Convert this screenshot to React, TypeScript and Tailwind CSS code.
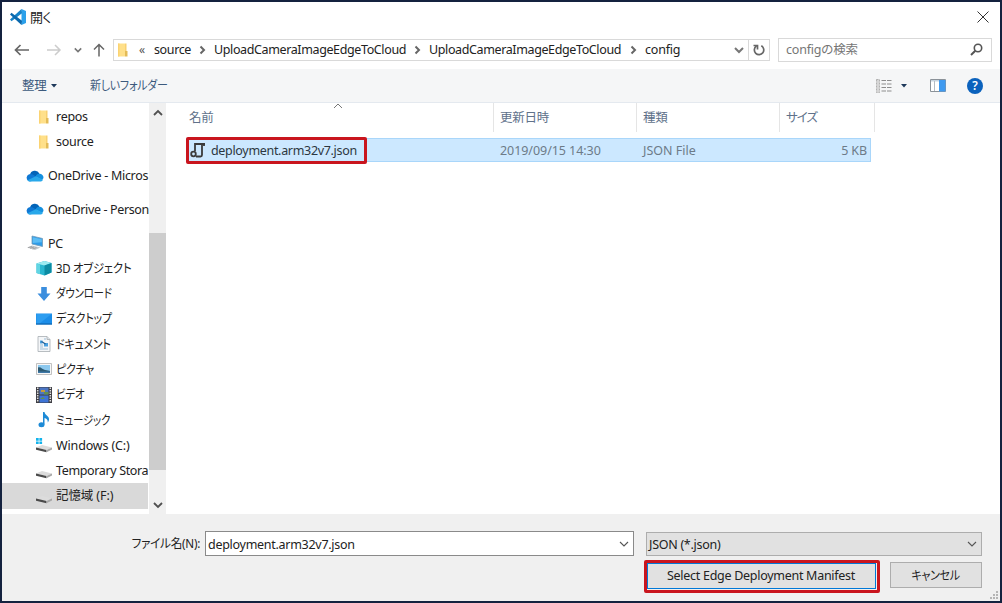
import { ReactNode } from 'react'
import clsx from 'clsx'

type NavItem = {
  label: string
  icon: ReactNode
  text?: string
  indent?: string
  gap?: boolean
  active?: boolean
}

const Chevron = ({ d, className, w = 1.6 }: { d: string; className?: string; w?: number }) => (
  <svg viewBox="0 0 10 10" className={clsx('h-2.5 shrink-0', className ?? 'w-2.5')} fill="none" stroke="currentColor" strokeWidth={w}>
    <path d={d} />
  </svg>
)

const DOWN = 'M1 3l4 4 4-4'
const UP = 'M1 7l4-4 4 4'
const RIGHT = 'M3.5 1.5L7 5 3.5 8.5'

// narrow kana, as in the system UI font
const KANA = 'inline-block origin-left scale-x-[.84]'

const Folder = () => (
  <svg viewBox="0 0 16 16" className="size-4 shrink-0">
    <path d="M3 1.5h7v13H3z" fill="#ffe08a" />
    <path d="M10 9h2.5v5.5H10z" fill="#e3bb57" />
    <path d="M3 1.5h1.5v13H3z" fill="#fbd372" />
    <path d="M10 1.5h1.5V9H10z" fill="#f8d071" />
  </svg>
)

const OneDrive = () => (
  <svg viewBox="0 0 18 12" className="h-3 w-[18px] shrink-0">
    <path d="M4 5a5 5 0 0 1 9.4-1.6L10 8z" fill="#0364b8" />
    <path d="M1 9.5A3.8 3.8 0 0 1 5 4.1c1.5 0 5.7 3.2 8.7 4.9L4 11.5A3.5 3.5 0 0 1 1 9.5z" fill="#0f78d4" />
    <path d="M9.5 6.5c1-2.3 2.3-3 4-2.7A4 4 0 0 1 17.5 8l-1.5 2z" fill="#1490df" />
    <path d="M1.5 10.3L9.8 6.3l7.2 3.4c-.5 1.2-1.5 1.8-2.7 1.8H4c-1.1 0-1.9-.4-2.5-1.2z" fill="#28a8ea" />
  </svg>
)

const Computer = () => (
  <svg viewBox="0 0 18 16" className="h-4 w-[18px] shrink-0">
    <path d="M6 1l10.5 2.5v8L6 9z" fill="#2d9be8" stroke="#7199b8" strokeWidth=".8" />
    <path d="M6.8 2.2l9 2v3l-9 .8z" fill="#5bbcf4" />
    <path d="M1 12.5l5-2 8.5 2L9 15z" fill="#c4c8cc" />
    <path d="M2 12.7l4-1.2M4 13.4l4-1.4M6.5 14l4-1.4" stroke="#8d8d8d" strokeWidth=".6" />
  </svg>
)

const Cube = () => (
  <svg viewBox="0 0 16 16" className="size-4 shrink-0">
    <path d="M.5 3.500L8.500 1 15.500 3v9.500L8.500 15.500.5 13z" fill="#29b6cf" />
    <path d="M.5 3.500L8.500 1l7 2-7 2.500z" fill="#9cebf1" />
    <path d="M8.500 5.500l7-2.500v9.500l-7 3z" fill="#0c8ba3" />
    <path d="M.5 3.500l3.500 1v9.700L.5 13z" fill="#61d5e3" />
  </svg>
)

const Download = () => (
  <svg viewBox="0 0 16 16" className="size-4 shrink-0">
    <path d="M5.200 1h5.600v6.500H14.500L8 15 1.500 7.500h3.700z" fill="#3b8ede" />
  </svg>
)

const Desktop = () => (
  <svg viewBox="0 0 16 16" className="size-4 shrink-0">
    <path d="M0 2.500h16v11H0z" fill="#1b8de8" />
    <path d="M.5 3h15L3 13H.5z" fill="#2d9df0" />
    <path d="M0 12.500h16v1H0z" fill="#0a5da5" />
  </svg>
)

const Documents = () => (
  <svg viewBox="0 0 16 16" className="size-4 shrink-0">
    <path d="M2 .5h9l3 3v12H2z" fill="#f4f6f8" stroke="#a7adb3" strokeWidth=".8" />
    <path d="M11 .5v3h3" fill="#dde2e6" stroke="#a7adb3" strokeWidth=".8" />
    <path d="M4 4.500h2.500v3H4zM8 7h4v3.500H8z" fill="#4aa0df" />
    <path d="M8 3h2M4 9h3M4 11h3M4 13h8" stroke="#9dbdd6" />
    <path d="M5.500 5.500l4 2.500" stroke="#1d5d96" strokeWidth="1.200" />
  </svg>
)

const Pictures = () => (
  <svg viewBox="0 0 16 16" className="size-4 shrink-0">
    <path d="M.5 2.500h15v11H.5z" fill="#f7f7f7" stroke="#b3b3b3" strokeWidth=".8" />
    <path d="M2 4h12v8H2z" fill="#8cc8ee" />
    <path d="M2 6.500c3-1 4 2 7 2.500 2 .3 4 .5 5 1v2H2z" fill="#2d5a72" />
    <path d="M2 10.500h12V12H2z" fill="#3f79a8" />
  </svg>
)

const Videos = () => (
  <svg viewBox="0 0 16 16" className="size-4 shrink-0">
    <path d="M0 0h16v16H0z" fill="#3e3e44" />
    <path d="M3.500.5h9v7h-9z" fill="#4c76c4" />
    <path d="M3.500 8.500h9v7h-9z" fill="#3e74d6" />
    <path d="M5 3h4v2H5z" fill="#c79a3a" />
    <path d="M8 5h4.500v2.500H8zM4 12l3-2 2 2z" fill="#609052" />
    <path d="M1.700 .5v15M14.300 .5v15" stroke="#e0e0e0" strokeWidth="1.500" strokeDasharray="1.500 1" />
  </svg>
)

const Music = () => (
  <svg viewBox="0 0 16 16" className="size-4 shrink-0">
    <path d="M7 0h1.500c.3 3 4.500 3.700 4.500 7 0 1.500-.5 2.500-1.200 3.500.3-2.800-1.300-4-3.300-4.500v6.500H7z" fill="#1d8ad6" />
    <ellipse cx="5.500" cy="12.800" rx="3" ry="2.500" fill="#1d8ad6" />
  </svg>
)

const Drive = ({ windows }: { windows?: boolean }) => (
  <svg viewBox="0 0 16 16" className="size-4 shrink-0">
    <path d="M0 10.500L6 8l10 2.500-5.500 2.500z" fill="#dcdcdc" />
    <path d="M0 10.500L10.500 13v2.300L0 12.800z" fill="#4a4a4a" />
    <path d="M10.500 13l5.500-2.500v2l-5.500 2.800z" fill="#a8a8a8" />
    {windows && <path d="M0 1h2.700v2.700H0zM3.400 1h2.700v2.700H3.400zM0 4.400h2.700v2.700H0zM3.400 4.400h2.700v2.700H3.400z" fill="#12b3ec" />}
  </svg>
)

const navItems: NavItem[] = [
  { label: 'repos', icon: <Folder /> },
  { label: 'source', icon: <Folder /> },
  { label: 'OneDrive - Micros', icon: <OneDrive />, indent: 'pl-6', gap: true, text: '-mr-2' },
  { label: 'OneDrive - Person', icon: <OneDrive />, indent: 'pl-6', gap: true, text: '-mr-2 tracking-[-0.36px]' },
  { label: 'PC', icon: <Computer />, indent: 'pl-6', gap: true },
  { label: '3D オブジェクト', icon: <Cube />, text: 'inline-block origin-left scale-x-[.91]' },
  { label: 'ダウンロード', icon: <Download />, text: KANA },
  { label: 'デスクトップ', icon: <Desktop />, text: 'inline-block origin-left scale-x-[.88]' },
  { label: 'ドキュメント', icon: <Documents />, text: 'inline-block origin-left scale-x-[.88]' },
  { label: 'ピクチャ', icon: <Pictures />, text: 'inline-block origin-left scale-x-[.88]' },
  { label: 'ビデオ', icon: <Videos />, text: KANA },
  { label: 'ミュージック', icon: <Music />, text: KANA },
  { label: 'Windows (C:)', icon: <Drive windows />, text: 'tracking-[-0.15px]' },
  { label: 'Temporary Stora', icon: <Drive />, text: '-mr-2 tracking-[-0.36px]' },
  { label: '記憶域 (F:)', icon: <Drive />, active: true, text: 'tracking-[-0.1px]' },
]

function TitleBar() {
  return (
    <div className="flex h-[30px] items-center pr-[11px] pl-[7px]">
      <svg viewBox="0 0 18 18" className="size-[18px]">
        <path d="M12.500 1L17 3v12l-4.500 2z" fill="#2ba0ea" />
        <path d="M12.500 1L1 11.500l1.500 1.700L13 5.200z" fill="#1583c9" />
        <path d="M12.500 17L1 6.500l1.500-1.700L13 12.800z" fill="#0a68ad" />
      </svg>
      <span className="ml-[3px] text-[13px] tracking-[-0.4px]">開く</span>
      <svg viewBox="0 0 12 12" className="ml-auto size-3" stroke="#333" strokeWidth="1">
        <path d="M.5.5l11 11M11.500.5l-11 11" />
      </svg>
    </div>
  )
}

function AddressBar() {
  return (
    <div className="flex h-[37px] items-center pr-2 pb-px pl-3">
      <svg viewBox="0 0 16 12" className="h-3 w-4" fill="none" stroke="#666" strokeWidth="1.700">
        <path d="M15 6H2M6.500 1L1.500 6l5 5" />
      </svg>
      <svg viewBox="0 0 16 12" className="ml-4 h-3 w-4" fill="none" stroke="#ccc" strokeWidth="1.500">
        <path d="M1 6h12M9 1l5 5-5 5" />
      </svg>
      <Chevron d={DOWN} w={2} className="ml-3 w-2 text-[#777]" />
      <svg viewBox="0 0 12 14" className="ml-[11px] h-3.5 w-3" fill="none" stroke="#666" strokeWidth="1.500">
        <path d="M6 13.500V1.500M1 6.500l5-5 5 5" />
      </svg>
      <div className="ml-2 flex h-[22px] w-[657px] items-center border border-[#d9d9d9] pl-px tracking-[-0.38px]">
        <Folder />
        <span className="ml-2 w-[15px] text-[12px] text-[#555]">«</span>
        <span className="w-[42px] whitespace-nowrap">source</span>
        <Chevron d={RIGHT} w={2} className="mr-1.5 w-3 text-[#666]" />
        <span className="w-[197px] whitespace-nowrap">UploadCameraImageEdgeToCloud</span>
        <Chevron d={RIGHT} w={2} className="mr-1.5 w-3 text-[#666]" />
        <span className="w-[198px] whitespace-nowrap">UploadCameraImageEdgeToCloud</span>
        <Chevron d={RIGHT} w={2} className="mr-1.5 w-3 text-[#666]" />
        <span className="tracking-[-0.2px]">config</span>
        <Chevron d={DOWN} w={2} className="mr-1 ml-auto w-2.5 text-[#777]" />
        <div className="flex h-full w-[21px] items-center justify-center border-l border-[#d9d9d9]">
          <svg viewBox="0 0 12 12" className="size-3" fill="none" stroke="#666" strokeWidth="1.700">
            <path d="M8.300 1.800A4.700 4.700 0 1 1 3.200 2.200M.5 1.500h4v4" />
          </svg>
        </div>
      </div>
      <div className="ml-2 flex h-6 flex-1 items-center border border-[#d9d9d9] pr-2 pl-[7px] text-[#767676]">
        <span className="tracking-[-0.2px]">configの検索</span>
        <svg viewBox="0 0 14 14" className="ml-auto size-3.5" fill="none" stroke="#555">
          <circle cx="9" cy="5" r="3.700" strokeWidth="1.600" />
          <path d="M6.300 7.800L2 12" strokeWidth="2" />
        </svg>
      </div>
    </div>
  )
}

function Toolbar() {
  return (
    <div className="flex h-[34px] items-center border-b border-[#e4e9ef] bg-[#f5f6f7] pr-[17px] pl-5 text-[#3c5a7d]">
      <span className="tracking-[-0.2px]">整理</span>
      <svg viewBox="0 0 6 4" className="ml-1 h-1 w-1.5" fill="#1e395b">
        <path d="M0 0h6L3 3.500z" />
      </svg>
      <span className="ml-[33px] inline-block origin-left scale-x-[.88]">新しいフォルダー</span>
      <svg viewBox="0 0 16 14" className="ml-auto h-3.5 w-4">
        <path d="M.5.5h3v13h-3z" fill="#d6d6d6" stroke="#999" strokeWidth=".7" strokeDasharray="2 1" />
        <path d="M5.500 1.500H10M5.500 5H10M5.500 8.500H10M5.500 12H10M11 1.500h4.500M11 5h4.500M11 8.500h4.500M11 12h4.500" stroke="#8d8d8d" />
      </svg>
      <svg viewBox="0 0 6 4" className="ml-[9px] h-1 w-1.5" fill="#1e395b">
        <path d="M0 0h6L3 3.500z" />
      </svg>
      <svg viewBox="0 0 16 13" className="ml-[23px] h-[13px] w-4">
        <path d="M.5.5h15v12H.5z" fill="#fff" stroke="#8b9299" />
        <path d="M1 1h14v1.500H1z" fill="#c9d4de" />
        <path d="M4.500 2v10" stroke="#b5bcc4" />
        <path d="M9 1h6.500v11.500H9z" fill="#3f9af0" />
      </svg>
      <div className="ml-[21px] flex size-4 items-center justify-center rounded-full bg-[#0b62bd] text-[12px] font-semibold text-white">?</div>
    </div>
  )
}

function Sidebar() {
  return (
    <div className="flex w-[165px] shrink-0">
      <div className="w-[146px] pt-px">
        {navItems.map((item) => (
          <div
            key={item.label}
            className={clsx(
              'flex h-[25.3px] items-center whitespace-nowrap',
              item.indent ?? 'pl-[34px]',
              item.gap && 'mt-[8.4px]',
              item.active && 'bg-[#d9d9d9]',
            )}
          >
            {item.icon}
            <span className={clsx('mt-px ml-1', item.text)}>{item.label}</span>
          </div>
        ))}
      </div>
      <div className="ml-px flex w-[17px] flex-col items-center bg-[#f0f0f0]">
        <Chevron d={UP} w={1.8} className="mt-[5px] w-2.5 text-[#505050]" />
        <div className="mt-[115px] h-[237px] w-full bg-[#cdcdcd]" />
        <Chevron d={DOWN} w={1.8} className="mt-auto mb-1 w-2.5 text-[#505050]" />
      </div>
    </div>
  )
}

function FileList() {
  return (
    <div className="relative min-w-0 flex-1 pl-[19px]">
      <Chevron d={UP} w={1} className="absolute top-[-2px] left-[166px] w-2.5 text-[#777]" />
      <div className="flex h-[29px] items-center text-[#60718a]">
        <div className="w-[307px] pl-[3px]">名前</div>
        <div className="flex h-full w-[143px] items-center border-l border-[#e5e5e5] pl-1.5">更新日時</div>
        <div className="flex h-full w-[143px] items-center border-l border-[#e5e5e5] pl-1.5">種類</div>
        <div className="flex h-full w-[96px] items-center border-x border-[#e5e5e5] pl-1.5 tracking-[-1px]">サイズ</div>
      </div>
      <div className="mt-[6px] flex h-6 w-[685px] items-center border border-[#a9d6fa] bg-[#cce8ff] text-[#6d7b88]">
        <div className="-ml-px flex h-[27px] w-[181px] shrink-0 items-center rounded-[2px] border-3 border-[#c9151e] pl-px text-[#2c3740]">
          <svg viewBox="0 0 16 16" className="size-4" fill="none" stroke="#3b3b3b" strokeWidth="1.800">
            <path d="M5 9V2h10M14 2v2M12 2.500V13c0 1-.5 1.500-1.500 1.500H6" />
            <circle cx="3.500" cy="12" r="2.300" />
          </svg>
          <span className="mt-0.5 ml-[5px] tracking-[-0.32px]">deployment.arm32v7.json</span>
        </div>
        <span className="mt-0.5 ml-[133px] w-[143px] tracking-[-0.06px]">2019/09/15 14:30</span>
        <span className="mt-0.5 tracking-normal">JSON File</span>
        <span className="mt-0.5 mr-[3px] ml-auto tracking-[-0.1px]">5 KB</span>
      </div>
    </div>
  )
}

function Footer() {
  return (
    <div className="relative h-[87px] bg-[#f0f0f0] pt-[17px]">
      <div className="flex h-[25px] items-center">
        <span className="mt-px w-[203px] origin-[198px] scale-x-[.93] pr-[5px] text-right">ファイル名(N):</span>
        <div className="flex h-[25px] w-[429px] items-center border border-[#8a8a8a] bg-white pr-1 pl-0.5">
          <span className="mt-0.5">deployment.arm32v7.json</span>
          <Chevron d={DOWN} w={1.1} className="ml-auto w-2.5 text-[#555]" />
        </div>
        <div className="ml-3 flex h-6 w-[336px] items-center border border-[#adadad] bg-[#e1e1e1] pr-1 pl-0.5">
          <span className="mt-0.5">JSON (*.json)</span>
          <Chevron d={DOWN} w={1.1} className="ml-auto w-2.5 text-[#555]" />
        </div>
      </div>
      <div className="mt-1 flex items-start pl-[642px]">
        <div className="h-[33px] w-[236px] rounded-[2px] border-3 border-[#c9151e] pr-px">
          <div className="flex h-[26px] items-center justify-center border border-[#0078d7] bg-[#e1e1e1] pr-px">Select Edge Deployment Manifest</div>
        </div>
        <div className="mt-0.5 ml-[10px] flex h-[26px] w-[92px] items-center justify-center border border-[#adadad] bg-[#e1e1e1]">
          <span className="mt-0.5 inline-block scale-x-[.88]">キャンセル</span>
        </div>
      </div>
      <svg viewBox="0 0 9 9" className="absolute right-px bottom-px size-[9px]" fill="#b5b5b5">
        <path d="M6 0h2v2H6zM3 3h2v2H3zM6 3h2v2H6zM0 6h2v2H0zM3 6h2v2H3zM6 6h2v2H6z" />
      </svg>
    </div>
  )
}

export default function App() {
  return (
    <div className="flex h-[603px] w-[1002px] flex-col border-2 border-[#14223f] bg-white font-['Noto_Sans','Noto_Sans_CJK_JP',sans-serif] text-[12.5px] leading-[18px] tracking-[-0.28px] text-[#222] [font-feature-settings:'palt']">
      <TitleBar />
      <AddressBar />
      <Toolbar />
      <div className="flex min-h-0 flex-1">
        <Sidebar />
        <FileList />
      </div>
      <Footer />
    </div>
  )
}
